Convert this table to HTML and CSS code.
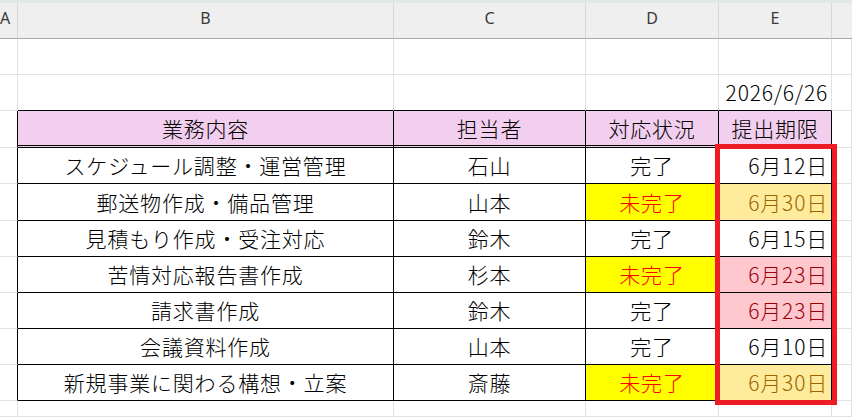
FILE: index.html
```html
<!DOCTYPE html>
<html lang="ja">
<head>
<meta charset="utf-8">
<title>業務一覧</title>
<link rel="stylesheet" href="styles.css">
</head>
<body>
<div class="topstrip"></div>
<div class="sheet">
  <div class="grid">
    <div class="ch ch-a">A</div><div class="ch">B</div><div class="ch">C</div><div class="ch">D</div><div class="ch">E</div><div class="ch ch-f"></div>

    <div class="c"></div><div class="c"></div><div class="c"></div><div class="c"></div><div class="c"></div><div class="c"></div>

    <div class="c"></div><div class="c above"></div><div class="c above"></div><div class="c above"></div><div class="c above right">2026/6/26</div><div class="c"></div>

    <div class="c edge"></div><div class="c t th">業務内容</div><div class="c t th">担当者</div><div class="c t th">対応状況</div><div class="c t th">提出期限</div><div class="c"></div>

    <div class="c edge"></div><div class="c t">スケジュール調整・運営管理</div><div class="c t">石山</div><div class="c t">完了</div><div class="c t right">6月12日</div><div class="c"></div>

    <div class="c edge"></div><div class="c t">郵送物作成・備品管理</div><div class="c t">山本</div><div class="c t todo">未完了</div><div class="c t right warn">6月30日</div><div class="c"></div>

    <div class="c edge"></div><div class="c t">見積もり作成・受注対応</div><div class="c t">鈴木</div><div class="c t">完了</div><div class="c t right">6月15日</div><div class="c"></div>

    <div class="c edge"></div><div class="c t">苦情対応報告書作成</div><div class="c t">杉本</div><div class="c t todo">未完了</div><div class="c t right late">6月23日</div><div class="c"></div>

    <div class="c edge"></div><div class="c t">請求書作成</div><div class="c t">鈴木</div><div class="c t">完了</div><div class="c t right late">6月23日</div><div class="c"></div>

    <div class="c edge"></div><div class="c t">会議資料作成</div><div class="c t">山本</div><div class="c t">完了</div><div class="c t right">6月10日</div><div class="c"></div>

    <div class="c edge"></div><div class="c t">新規事業に関わる構想・立案</div><div class="c t">斎藤</div><div class="c t todo">未完了</div><div class="c t right warn">6月30日</div><div class="c"></div>

    <div class="c"></div><div class="c"></div><div class="c"></div><div class="c"></div><div class="c"></div><div class="c"></div>
  </div>
  <div class="redbox"></div>
</div>
</body>
</html>
```

FILE: styles.css
```css
html, body {
  margin: 0;
  padding: 0;
  background: #ffffff;
  overflow: hidden;
}

body {
  width: 852px;
  height: 417px;
  font-family: "Noto Sans CJK JP", "Noto Sans", sans-serif;
  color: #000000;
}

.topstrip {
  height: 3px;
  background: #e1e8e8;
}

.sheet {
  position: relative;
  height: 414px;
}

.grid {
  display: grid;
  grid-template-columns: 18px 376px 192px 133px 113px 1fr;
  grid-template-rows: 36px 36px 36px 37px 36px 37px 36px 36px 36px 36px 36px 1fr;
  height: 100%;
}

.ch {
  box-sizing: border-box;
  background: #efefef;
  border-right: 1px solid #d6d6d6;
  border-bottom: 1px solid #a8a8a8;
  display: flex;
  justify-content: center;
  align-items: flex-start;
  padding-top: 5px;
  font-family: "Noto Sans", "Open Sans", sans-serif;
  font-size: 16px;
  line-height: 20px;
  color: #3a3a3a;
}

.ch-a {
  justify-content: flex-start;
  padding-left: 0;
}

.ch-f {
  border-right: none;
}

.c {
  box-sizing: border-box;
  border-right: 1px solid #e1e1e1;
  border-bottom: 1px solid #e1e1e1;
  display: flex;
  align-items: center;
  justify-content: center;
  font-size: 21px;
  font-weight: 300;
  letter-spacing: 0.8px;
  line-height: 1;
  white-space: nowrap;
}

.above {
  border-bottom-color: #000000;
}

.edge {
  border-right-color: #000000;
}

.t {
  border-right-color: #000000;
  border-bottom-color: #000000;
}

.th {
  background: #f2cfee;
  border-bottom: 3px double #000000;
}

.right {
  justify-content: flex-end;
  padding-right: 3px;
}

.todo {
  background: #ffff00;
  color: #ff0000;
}

.warn {
  background: #ffeb9c;
  color: #9c6500;
}

.late {
  background: #ffc7ce;
  color: #9c0006;
}

.redbox {
  position: absolute;
  left: 715px;
  top: 141px;
  width: 122px;
  height: 261px;
  box-sizing: border-box;
  border: 5px solid #ee1c25;
  pointer-events: none;
}
```
